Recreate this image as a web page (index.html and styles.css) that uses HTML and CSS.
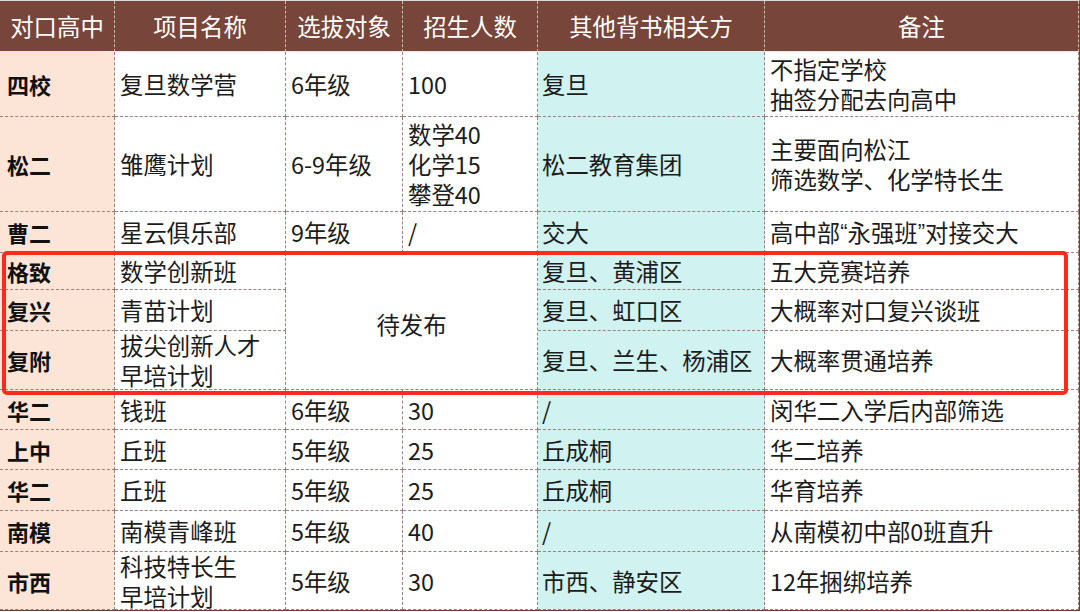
FILE: index.html
```html
<!DOCTYPE html>
<html lang="zh-CN">
<head>
<meta charset="utf-8">
<title>对口高中项目</title>
<link rel="stylesheet" href="styles.css">
</head>
<body>
<div class="sheet">
  <div class="grid">
    <div class="c h">对口高中</div>
    <div class="c h">项目名称</div>
    <div class="c h">选拔对象</div>
    <div class="c h">招生人数</div>
    <div class="c h">其他背书相关方</div>
    <div class="c h">备注</div>

    <div class="c k">四校</div>
    <div class="c w">复旦数学营</div>
    <div class="c w">6年级</div>
    <div class="c w">100</div>
    <div class="c t">复旦</div>
    <div class="c w">不指定学校<br>抽签分配去向高中</div>

    <div class="c k">松二</div>
    <div class="c w">雏鹰计划</div>
    <div class="c w">6-9年级</div>
    <div class="c w">数学40<br>化学15<br>攀登40</div>
    <div class="c t">松二教育集团</div>
    <div class="c w">主要面向松江<br>筛选数学、化学特长生</div>

    <div class="c k">曹二</div>
    <div class="c w">星云俱乐部</div>
    <div class="c w">9年级</div>
    <div class="c w">/</div>
    <div class="c t">交大</div>
    <div class="c w">高中部<span class="q">“</span>永强班<span class="q">”</span>对接交大</div>

    <div class="c k">格致</div>
    <div class="c w">数学创新班</div>
    <div class="c w merged">待发布</div>
    <div class="c t">复旦、黄浦区</div>
    <div class="c w">五大竞赛培养</div>

    <div class="c k">复兴</div>
    <div class="c w">青苗计划</div>
    <div class="c t">复旦、虹口区</div>
    <div class="c w">大概率对口复兴谈班</div>

    <div class="c k">复附</div>
    <div class="c w">拔尖创新人才<br>早培计划</div>
    <div class="c t">复旦、兰生、杨浦区</div>
    <div class="c w">大概率贯通培养</div>

    <div class="c k">华二</div>
    <div class="c w">钱班</div>
    <div class="c w">6年级</div>
    <div class="c w">30</div>
    <div class="c t">/</div>
    <div class="c w">闵华二入学后内部筛选</div>

    <div class="c k">上中</div>
    <div class="c w">丘班</div>
    <div class="c w">5年级</div>
    <div class="c w">25</div>
    <div class="c t">丘成桐</div>
    <div class="c w">华二培养</div>

    <div class="c k">华二</div>
    <div class="c w">丘班</div>
    <div class="c w">5年级</div>
    <div class="c w">25</div>
    <div class="c t">丘成桐</div>
    <div class="c w">华育培养</div>

    <div class="c k">南模</div>
    <div class="c w">南模青峰班</div>
    <div class="c w">5年级</div>
    <div class="c w">40</div>
    <div class="c t">/</div>
    <div class="c w">从南模初中部0班直升</div>

    <div class="c k">市西</div>
    <div class="c w">科技特长生<br>早培计划</div>
    <div class="c w">5年级</div>
    <div class="c w">30</div>
    <div class="c t">市西、静安区</div>
    <div class="c w">12年捆绑培养</div>
  </div>
  <div class="highlight"></div>
</div>
</body>
</html>
```

FILE: styles.css
```css
html, body {
  margin: 0;
  padding: 0;
  background: #ffffff;
}

body {
  width: 1080px;
  height: 612px;
  overflow: hidden;
  font-family: "Noto Sans CJK SC", "Noto Sans", sans-serif;
}

.sheet {
  position: relative;
  width: 1080px;
  border-top: 1px solid #d9d9d9;
  border-right: 1px solid #6e3f36;
  border-bottom: 1px solid #6e3f36;
  box-sizing: border-box;
}

.grid {
  display: grid;
  grid-template-columns: 115px 171px 117px 135px 227px 1fr;
  grid-template-rows: 51px 65px 95px 41px 37px 41px 59px 40px 40px 41px 41px 58px;
}

.c {
  box-sizing: border-box;
  display: flex;
  align-items: center;
  padding-left: 5px;
  white-space: nowrap;
  font-size: 23.4px;
  line-height: 30px;
  color: #1c1c1c;
  border-right: 1px dashed #9c817b;
  border-bottom: 1px dashed #9c817b;
}

.q {
  font-family: "Liberation Sans", sans-serif;
  font-size: 22px;
}

.h {
  background: #774539;
  color: #ffffff;
  justify-content: center;
  padding-left: 0;
  border-right: 1px dashed #cdb9b4;
  border-bottom: 1px solid #f3e6e2;
}

.k {
  background: #fce4d6;
  font-weight: bold;
  font-size: 22px;
  padding-left: 7px;
  color: #111111;
}

.w {
  background: #ffffff;
}

.t {
  background: #d0f2f0;
  padding-left: 4px;
}

.merged {
  grid-column: 3 / span 2;
  grid-row: 5 / span 3;
  justify-content: center;
  padding-left: 0;
  padding-top: 5px;
}

.highlight {
  position: absolute;
  left: 2px;
  top: 250px;
  width: 1066px;
  height: 144px;
  box-sizing: border-box;
  border: 4px solid #ff2a1f;
  border-radius: 5px;
  pointer-events: none;
}
```
